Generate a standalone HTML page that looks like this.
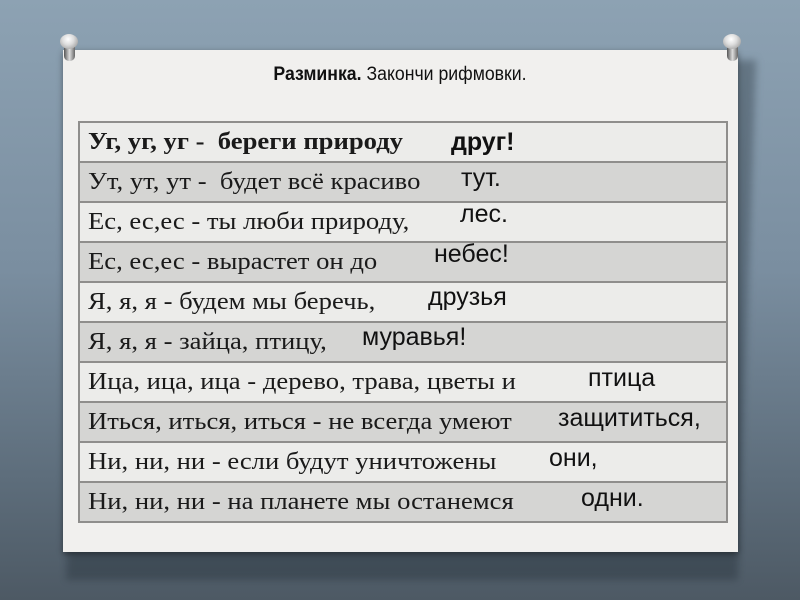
<!DOCTYPE html>
<html><head><meta charset="utf-8"><style>
html,body{margin:0;padding:0}
body{width:800px;height:600px;overflow:hidden;position:relative;background:linear-gradient(180deg,#8da2b3 0%,#7a8ea0 45%,#5d6d7b 80%,#4d5964 100%);font-family:"Liberation Serif",serif}
.shadow{position:absolute;left:75px;top:60px;width:672px;height:520px;background:rgba(30,40,50,.35);filter:blur(4px);transform:skewX(-2deg)}
.paper{position:absolute;left:63px;top:50px;width:675px;height:502px;background:#f1f0ee;box-shadow:0 2px 6px rgba(0,0,0,.4)}
.title{position:absolute;left:0;width:100%;top:64px;text-align:center;font:19px "Liberation Sans",sans-serif;color:#111;transform:scaleX(.93)}
.title b{font-weight:bold}
table{position:absolute;left:78px;top:121px;width:650px;border-collapse:collapse;border:2px solid #8f8e8c}
td{height:38px;border-top:2px solid #8f8e8c;padding:0 0 0 8px;font-size:24px;color:#1a1a1a;white-space:nowrap;position:relative}
td span{display:inline-block;transform:scaleX(1.11);transform-origin:left center}
tr:nth-child(odd) td{background:#ececea}
tr:nth-child(even) td{background:#d5d5d3}
.a{position:absolute;font:25px "Liberation Sans",sans-serif;color:#111}
.pin{position:absolute;width:22px;height:28px}
.pin i{position:absolute;left:2px;top:0;width:18px;height:15px;border-radius:50%;background:radial-gradient(circle at 45% 35%,#fff 0,#ddd 40%,#888 100%)}
.pin s{position:absolute;left:6px;top:9px;width:11px;height:18px;background:linear-gradient(90deg,#555,#ddd,#666);border-radius:0 0 5px 5px}
</style></head><body>
<div class="shadow"></div>
<div class="paper"></div>
<div class="pin" style="left:58px;top:34px"><s></s><i></i></div>
<div class="pin" style="left:721px;top:34px"><s></s><i></i></div>
<div class="title"><b>Разминка.</b> Закончи рифмовки.</div>
<table>
<tr><td style="border-top:0"><span><b>Уг, уг, уг - &nbsp;береги природу</b></span></td></tr>
<tr><td><span>Ут, ут, ут - &nbsp;будет всё красиво</span></td></tr>
<tr><td><span>Ес, ес,ес - ты люби природу,</span></td></tr>
<tr><td><span>Ес, ес,ес - вырастет он до</span></td></tr>
<tr><td><span>Я, я, я - будем мы беречь,</span></td></tr>
<tr><td><span>Я, я, я - зайца, птицу,</span></td></tr>
<tr><td><span>Ица, ица, ица - дерево, трава, цветы и</span></td></tr>
<tr><td><span>Иться, иться, иться - не всегда умеют</span></td></tr>
<tr><td><span>Ни, ни, ни - если будут уничтожены</span></td></tr>
<tr><td><span>Ни, ни, ни - на планете мы останемся</span></td></tr>
</table>
<div class="a" style="left:451px;top:128px;font-weight:bold">друг!</div>
<div class="a" style="left:461px;top:164px">тут.</div>
<div class="a" style="left:460px;top:200px">лес.</div>
<div class="a" style="left:434px;top:240px">небес!</div>
<div class="a" style="left:428px;top:283px">друзья</div>
<div class="a" style="left:362px;top:323px">муравья!</div>
<div class="a" style="left:588px;top:364px">птица</div>
<div class="a" style="left:558px;top:404px">защититься,</div>
<div class="a" style="left:549px;top:444px">они,</div>
<div class="a" style="left:581px;top:484px">одни.</div>
</body></html>
